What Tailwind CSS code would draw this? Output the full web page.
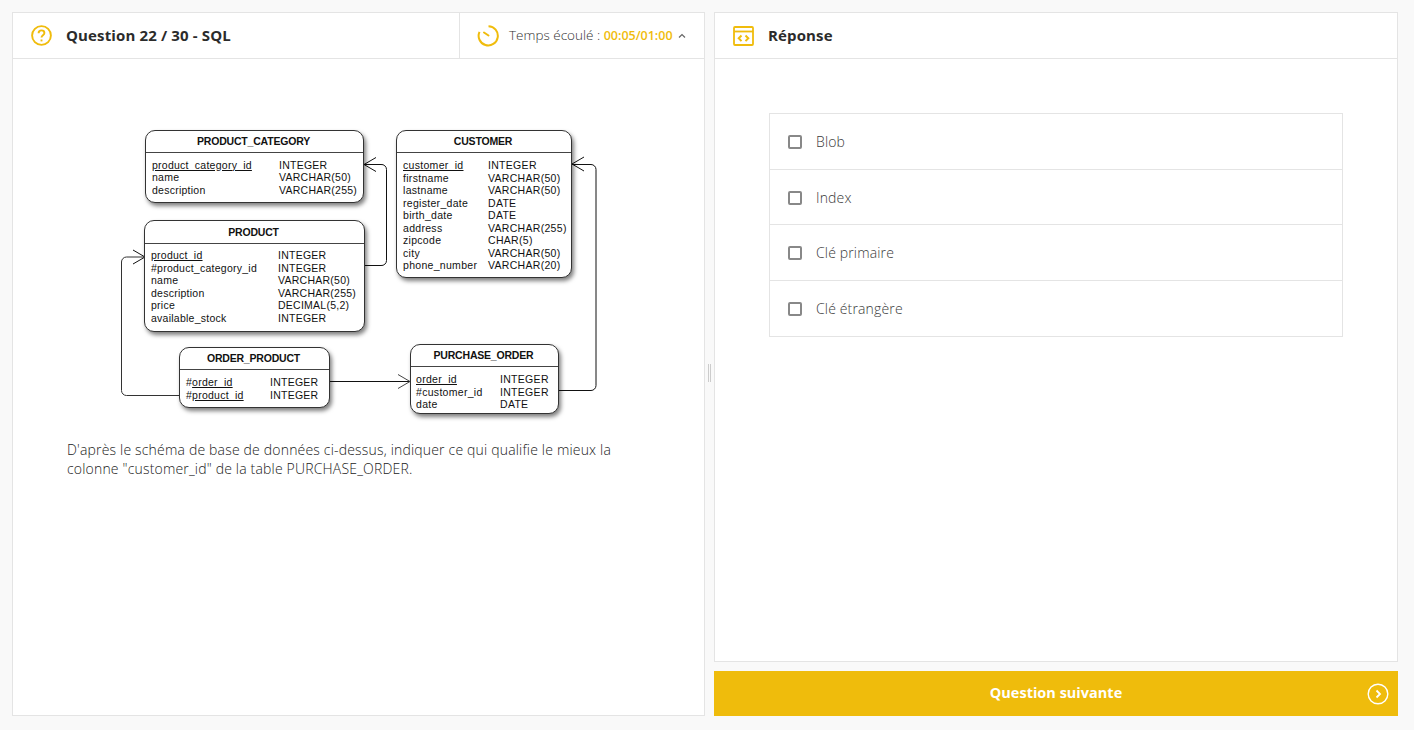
<!DOCTYPE html>
<html lang="fr">
<head>
    <meta charset="UTF-8">
    <meta name="viewport" content="width=device-width, initial-scale=1.0">
    <title>Question 22 / 30 - SQL</title>
    <script src="https://cdn.jsdelivr.net/npm/@tailwindcss/browser@4"></script>
</head>
<body class="bg-[#f9f9f9] font-['Open_Sans',sans-serif] text-[#333]">
    <div class="flex h-[730px] w-[1414px] pl-3 pr-4 pt-3 pb-[14px]">
        <!-- Question panel -->
        <section class="flex h-full w-[693px] flex-col border border-[#e4e4e4] bg-white">
            <header class="flex h-[46px] border-b border-[#e4e4e4]">
                <div class="flex flex-1 items-center pl-[18px]">
                    <svg class="w-[21px] h-[21px]" viewBox="0 0 21 21" fill="none" stroke="#f0bc0c" stroke-width="1.9">
                        <circle cx="10.5" cy="10.5" r="9.4"/>
                        <path d="M7.6 8.2c0-1.700 1.300-2.800 2.900-2.800s2.900 1 2.900 2.500c0 2.300-2.900 2.400-2.900 4.700"/>
                        <path d="M10.500 14.500v1.900"/>
                    </svg>
                    <h1 class="ml-[14px] text-[15px] font-bold tracking-[0.14px] text-[#2b2b2b]">Question 22 / 30 - SQL</h1>
                </div>
                <div class="flex w-[245px] items-center border-l border-[#e4e4e4] pl-[17px]">
                    <svg class="w-[23px] h-[23px]" viewBox="0 0 23 23" fill="none" stroke="#f0bc0c" stroke-width="2">
                        <path d="M11.500 2.200a9.600 9.600 0 1 1-9 5.600"/>
                        <path d="M7 8.500l4.500 3" stroke-linecap="round"/>
                    </svg>
                    <span class="ml-[9px] text-[13.5px] font-light text-[#333]">Temps écoulé : <span class="text-[12.5px] font-semibold text-[#f0bc0c]">00:05/01:00</span></span>
                    <svg class="ml-[5px] w-2 h-2" viewBox="0 0 8 8" fill="none" stroke="#666" stroke-width="1.2"><path d="M1 5.500l3-3 3 3"/></svg>
                </div>
            </header>
            <div class="pl-[54px]">
                <!-- Schema diagram -->
                <div class="relative ml-[43px] mt-[61px] h-[300px] w-[500px] font-['Liberation_Sans',sans-serif] text-[10.5px] leading-[12.5px] text-[#111]">
                    <svg class="absolute left-0 top-0" width="500" height="300" viewBox="0 0 500 300" fill="none" stroke="#111" stroke-width="1">
                        <path d="M255 145.500h16a5 5 0 0 0 5.500-5v-91a5 5 0 0 0-5.500-5h-17"/>
                        <path d="M266 37.500l-12 7 12 7"/>
                        <path d="M70 275.500H16.500a5 5 0 0 1-5-5V142a5 5 0 0 1 5-5h18.500" stroke="#333"/>
                        <path d="M23 130l12 7-12 7"/>
                        <path d="M220 261.500h80"/>
                        <path d="M288 254.500l12 7-12 7" stroke="#444"/>
                        <path d="M449 270.500h32a5 5 0 0 0 5-5V49.500a5 5 0 0 0-5-5h-19"/>
                        <path d="M474 37l-12 7 12 7"/>
                    </svg>

                    <!-- PRODUCT_CATEGORY -->
                    <div class="absolute left-[35px] top-[10px] h-[73px] w-[219px] rounded-[10px] border border-[#333] bg-white shadow-[2px_3px_4px_rgba(0,0,0,0.5)]">
                        <div class="h-[22px] border-b border-[#444] pr-[2px] text-center font-bold leading-[21px] tracking-[-0.2px]">PRODUCT_CATEGORY</div>
                        <div class="grid grid-cols-[127px_1fr] pl-[6px] pt-[5.75px] tracking-[0.25px]">
                            <span class="underline">product_category_id</span><span>INTEGER</span>
                            <span>name</span><span>VARCHAR(50)</span>
                            <span>description</span><span>VARCHAR(255)</span>
                        </div>
                    </div>

                    <!-- CUSTOMER -->
                    <div class="absolute left-[286px] top-[10px] h-[148px] w-[176px] rounded-[10px] border border-[#333] bg-white shadow-[2px_3px_4px_rgba(0,0,0,0.5)]">
                        <div class="h-[22px] border-b border-[#444] pr-[2px] text-center font-bold leading-[21px] tracking-[-0.2px]">CUSTOMER</div>
                        <div class="grid grid-cols-[85px_1fr] pl-[6px] pt-[6px] tracking-[0.3px]">
                            <span class="underline">customer_id</span><span>INTEGER</span>
                            <span>firstname</span><span>VARCHAR(50)</span>
                            <span>lastname</span><span>VARCHAR(50)</span>
                            <span>register_date</span><span>DATE</span>
                            <span>birth_date</span><span>DATE</span>
                            <span>address</span><span>VARCHAR(255)</span>
                            <span>zipcode</span><span>CHAR(5)</span>
                            <span>city</span><span>VARCHAR(50)</span>
                            <span>phone_number</span><span>VARCHAR(20)</span>
                        </div>
                    </div>

                    <!-- PRODUCT -->
                    <div class="absolute left-[34px] top-[100px] h-[112px] w-[221px] rounded-[10px] border border-[#333] bg-white shadow-[2px_3px_4px_rgba(0,0,0,0.5)]">
                        <div class="h-[23px] border-b border-[#444] pr-[2px] text-center font-bold leading-[22px] tracking-[-0.2px]">PRODUCT</div>
                        <div class="grid grid-cols-[127px_1fr] pl-[6px] pt-[5.25px] tracking-[0.25px]">
                            <span class="underline">product_id</span><span>INTEGER</span>
                            <span>#product_category_id</span><span>INTEGER</span>
                            <span>name</span><span>VARCHAR(50)</span>
                            <span>description</span><span>VARCHAR(255)</span>
                            <span>price</span><span>DECIMAL(5,2)</span>
                            <span>available_stock</span><span>INTEGER</span>
                        </div>
                    </div>

                    <!-- ORDER_PRODUCT -->
                    <div class="absolute left-[69px] top-[227px] h-[61px] w-[151px] rounded-[10px] border border-[#333] bg-white shadow-[2px_3px_4px_rgba(0,0,0,0.5)]">
                        <div class="h-[22px] border-b border-[#444] pr-[2px] text-center font-bold leading-[21px] tracking-[-0.2px]">ORDER_PRODUCT</div>
                        <div class="grid grid-cols-[84px_1fr] pl-[6px] pt-[6px] tracking-[0.25px]">
                            <span>#<span class="underline">order_id</span></span><span>INTEGER</span>
                            <span>#<span class="underline">product_id</span></span><span>INTEGER</span>
                        </div>
                    </div>

                    <!-- PURCHASE_ORDER -->
                    <div class="absolute left-[300px] top-[224px] h-[70px] w-[149px] rounded-[10px] border border-[#333] bg-white shadow-[2px_3px_4px_rgba(0,0,0,0.5)]">
                        <div class="h-[22px] border-b border-[#444] pr-[2px] text-center font-bold leading-[21px] tracking-[-0.2px]">PURCHASE_ORDER</div>
                        <div class="grid grid-cols-[84px_1fr] pl-[5px] pt-[6px] tracking-[0.3px]">
                            <span class="underline">order_id</span><span>INTEGER</span>
                            <span>#customer_id</span><span>INTEGER</span>
                            <span>date</span><span>DATE</span>
                        </div>
                    </div>
                </div>
                <p class="mt-[20px] w-[560px] text-sm leading-[19px] font-light tracking-[0.18px] text-[#222]">D'après le schéma de base de données ci-dessus, indiquer ce qui qualifie le mieux la colonne "customer_id" de la table PURCHASE_ORDER.</p>
            </div>
        </section>

        <!-- Splitter -->
        <div class="flex w-[9px] items-center justify-center gap-px pt-[18px]">
            <span class="h-[18px] w-px bg-[#ccc]"></span>
            <span class="h-[18px] w-px bg-[#ccc]"></span>
        </div>

        <!-- Answer panel -->
        <section class="flex h-full w-[684px] flex-col gap-[9px]">
            <div class="flex flex-1 flex-col border border-[#e4e4e4] bg-white">
                <header class="flex h-[46px] items-center border-b border-[#e4e4e4] pl-[18px]">
                    <svg class="w-[21px] h-[20px]" viewBox="0 0 21 20" fill="none" stroke="#f0bc0c" stroke-width="1.8">
                        <rect x="1" y="1" width="19" height="18" rx="1"/>
                        <path d="M1 5.500h19"/>
                        <path d="M8.500 9.500l-2.800 2.800 2.800 2.800M12.500 9.500l2.800 2.800-2.800 2.800" stroke-width="2"/>
                    </svg>
                    <h2 class="ml-[14px] text-[15px] font-bold tracking-[0.14px] text-[#2b2b2b]">Réponse</h2>
                </header>
                <ul class="ml-[54px] mt-[54px] w-[574px] border border-[#e4e4e4] text-sm font-light tracking-[0.15px] text-[#3a3a3a]">
                    <li class="flex h-[56px] items-center border-b border-[#e4e4e4] pl-[18px]">
                        <span class="h-[14px] w-[14px] rounded-[2px] border-2 border-[#888]"></span>
                        <span class="ml-[14px]">Blob</span>
                    </li>
                    <li class="flex h-[55px] items-center border-b border-[#e4e4e4] pl-[18px] pt-px">
                        <span class="h-[14px] w-[14px] rounded-[2px] border-2 border-[#888]"></span>
                        <span class="ml-[14px]">Index</span>
                    </li>
                    <li class="flex h-[56px] items-center border-b border-[#e4e4e4] pl-[18px]">
                        <span class="h-[14px] w-[14px] rounded-[2px] border-2 border-[#888]"></span>
                        <span class="ml-[14px]">Clé primaire</span>
                    </li>
                    <li class="flex h-[55px] items-center pl-[18px]">
                        <span class="h-[14px] w-[14px] rounded-[2px] border-2 border-[#888]"></span>
                        <span class="ml-[14px]">Clé étrangère</span>
                    </li>
                </ul>
            </div>
            <button class="relative h-[45px] w-full bg-[#efbc0c] pb-[2px] text-[14.5px] font-bold text-white">
                Question suivante
                <svg class="absolute right-[9px] top-[12px] w-[22px] h-[22px]" viewBox="0 0 22 22" fill="none" stroke="#fff" stroke-width="1.4">
                    <circle cx="11" cy="11" r="9.800"/>
                    <path d="M9.500 7.500l3.500 3.500-3.500 3.500" stroke-width="1.800"/>
                </svg>
            </button>
        </section>
    </div>
</body>
</html>
